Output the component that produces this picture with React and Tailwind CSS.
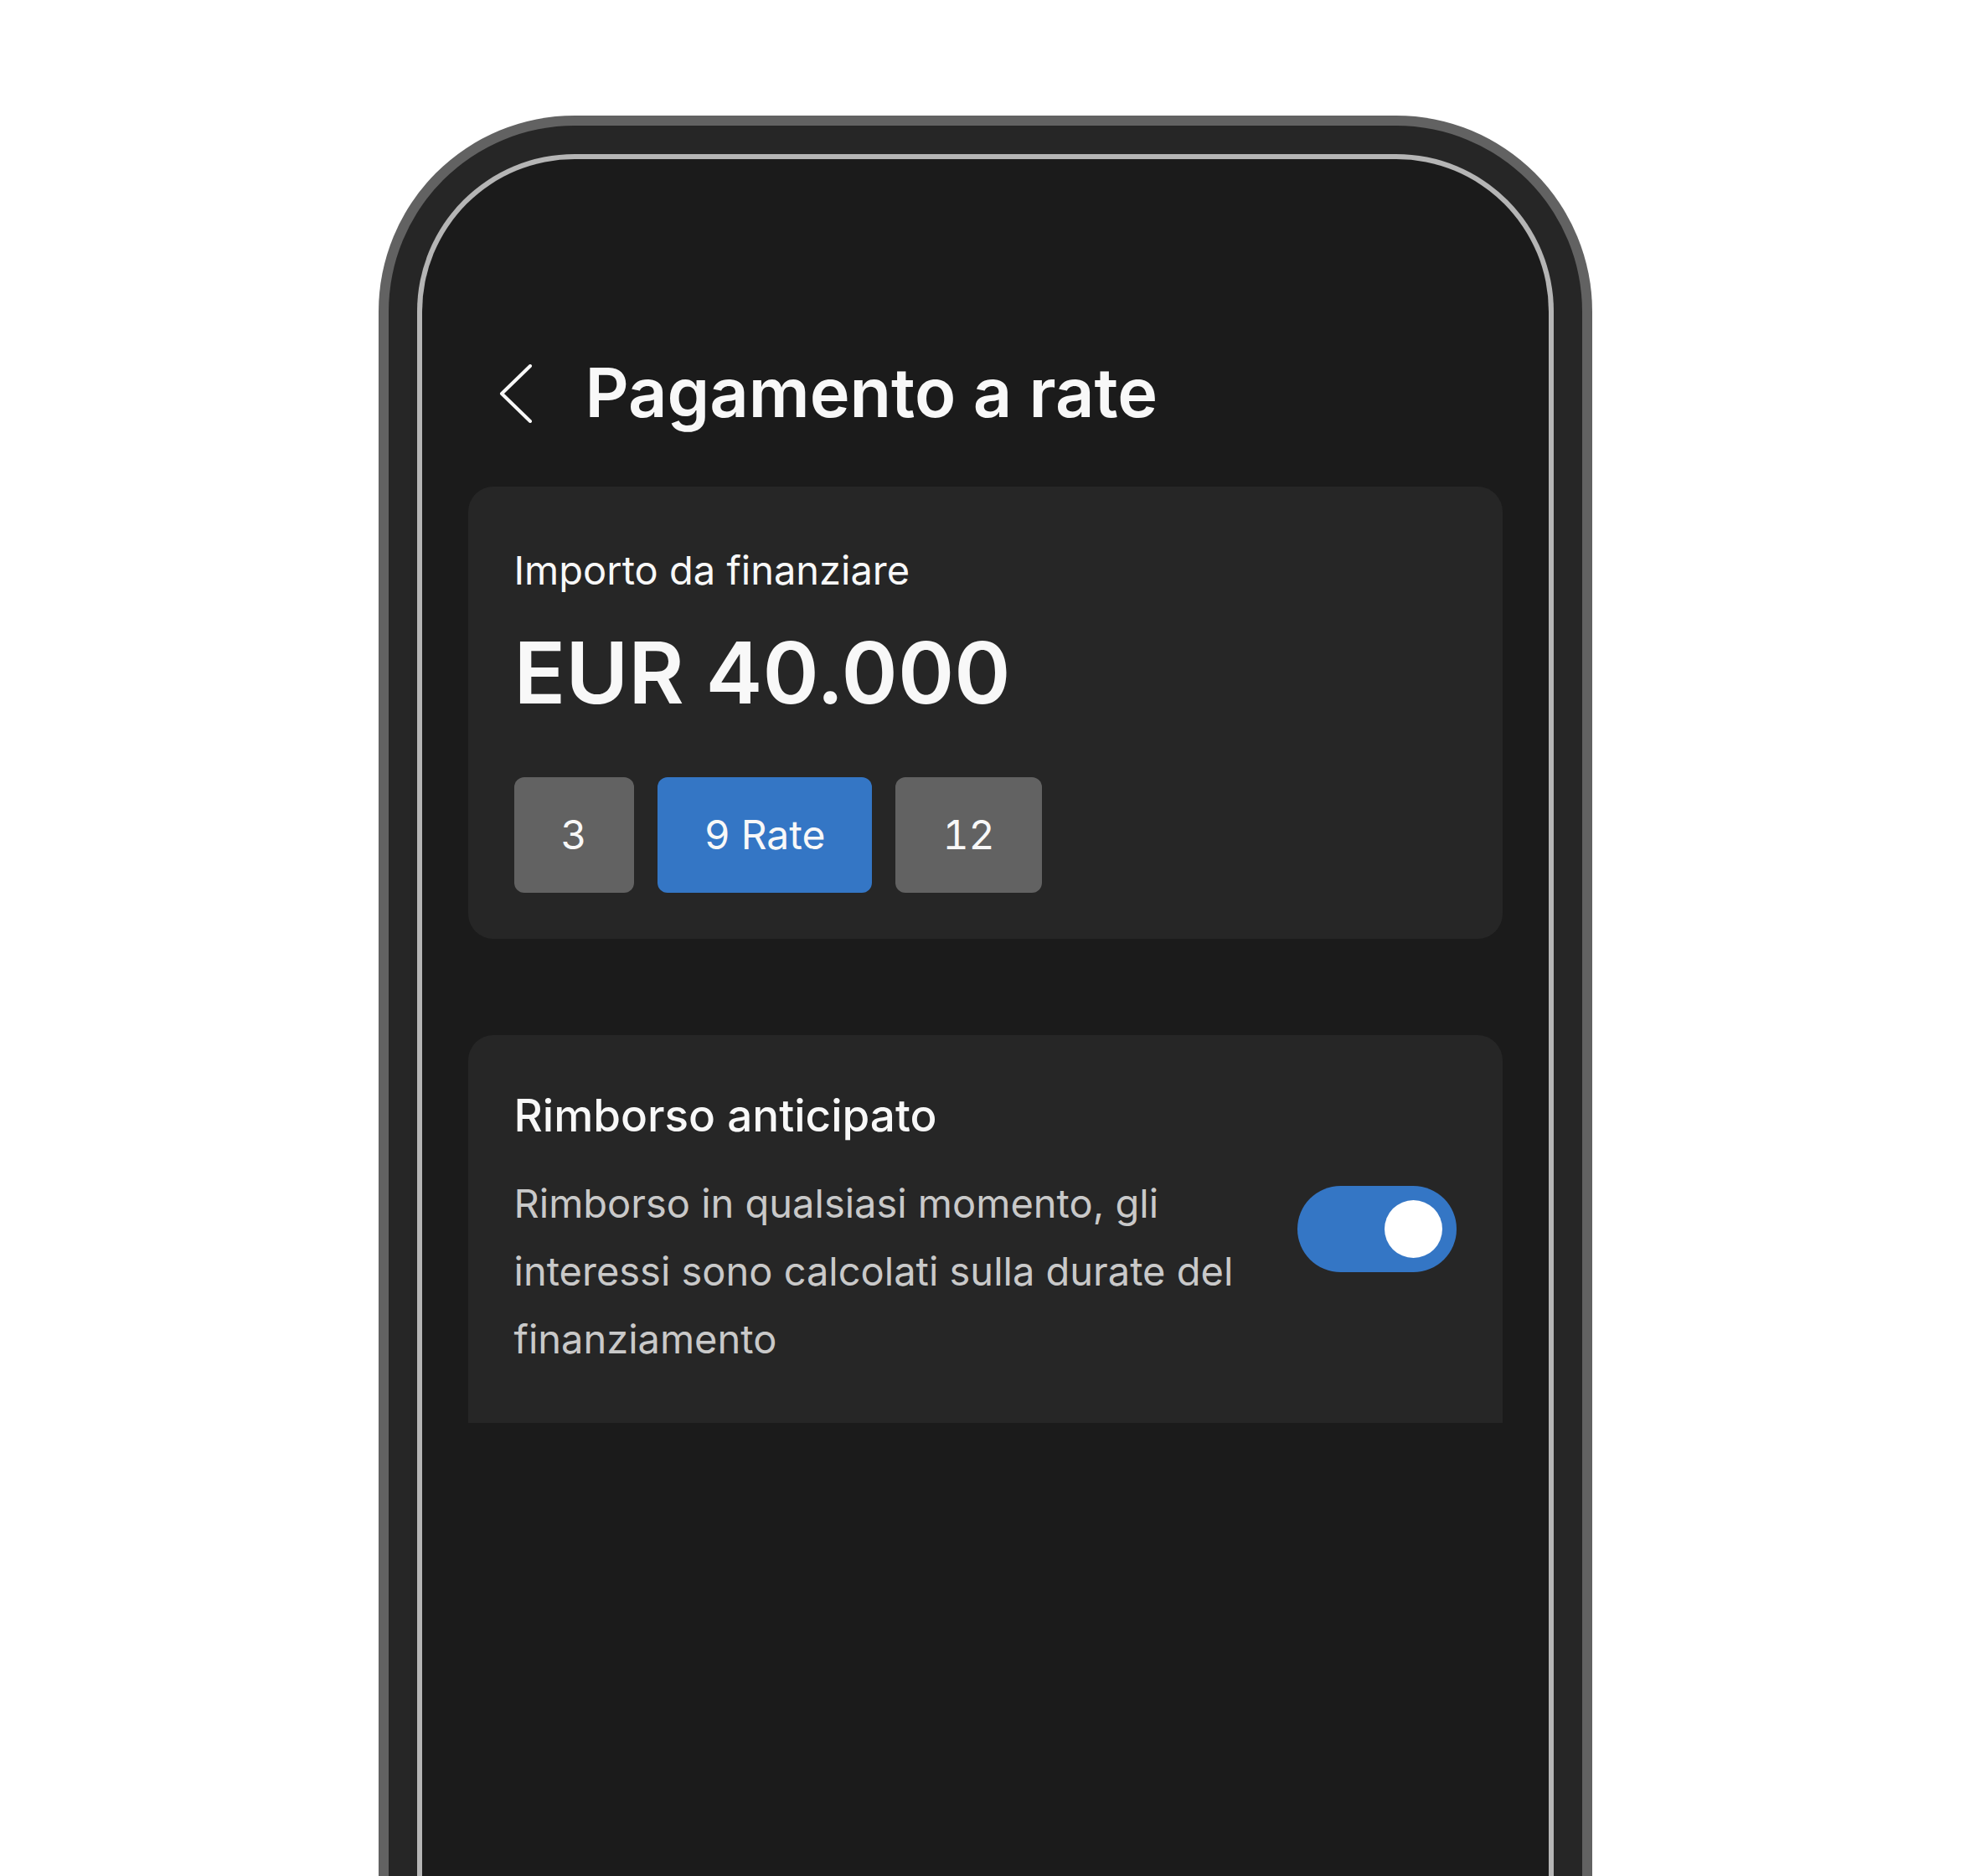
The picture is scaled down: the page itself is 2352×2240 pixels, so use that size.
import React, { useState } from 'react';

const font = { fontFamily: 'Inter, "Noto Sans", sans-serif' };

function BackChevron() {
  return (
    <svg width="40" height="70" viewBox="0 0 40 70" fill="none" className="shrink-0">
      <path
        d="M37 2 L3 35 L37 68"
        stroke="#f8f8f8"
        strokeWidth="4"
        strokeLinecap="round"
        strokeLinejoin="round"
      />
    </svg>
  );
}

function Toggle({ on, onChange }) {
  return (
    <button
      onClick={() => onChange(!on)}
      className={`mt-[20px] flex h-[103px] w-[190px] shrink-0 items-center rounded-full px-[17px] ${
        on ? 'justify-end bg-[#3476c5]' : 'justify-start bg-[#626262]'
      }`}
    >
      <span className="block h-[69px] w-[69px] rounded-full bg-white" />
    </button>
  );
}

export default function App() {
  const [rate, setRate] = useState(9);
  const [early, setEarly] = useState(true);

  const options = [3, 9, 12];

  return (
    <div className="h-[2240px] w-full overflow-hidden bg-white pt-[138px]" style={font}>
      {/* device frame */}
      <div className="mx-auto h-[2400px] w-[1449px] rounded-[234px] bg-[#626262] p-[12px]">
        <div className="h-full rounded-[222px] bg-[#262626] p-[34px]">
          <div className="h-full rounded-[188px] bg-[#b5b5b5] p-[6px]">
            <div className="flex h-full flex-col rounded-[182px] bg-[#1b1b1b] px-[55px] pt-[239px]">
              {/* header */}
              <div className="flex items-center gap-[63px] pl-[37px]">
                <BackChevron />
                <h1 className="text-[81px] font-semibold leading-none text-[#f8f8f8]">
                  Pagamento a rate
                </h1>
              </div>

              {/* amount card */}
              <div className="mt-[71px] rounded-[30px] bg-[#262626] px-[55px] pb-[55px] pt-[76px]">
                <p className="text-[47px] leading-none text-[#f8f8f8]">Importo da finanziare</p>
                <p className="mt-[48px] text-[102px] font-semibold leading-none text-[#f8f8f8]">
                  EUR 40.000
                </p>
                <div className="mt-[74px] flex gap-[28px]">
                  {options.map((n) => (
                    <button
                      key={n}
                      onClick={() => setRate(n)}
                      className={`flex h-[138px] items-center rounded-[12px] px-[56px] text-[48px] leading-none tabular-nums text-[#f8f8f8] ${
                        rate === n ? 'bg-[#3476c5]' : 'bg-[#626262]'
                      }`}
                    >
                      {rate === n ? `${n} Rate` : n}
                    </button>
                  ))}
                </div>
              </div>

              {/* early repayment */}
              <div className="mt-[115px] rounded-t-[30px] bg-[#262626] px-[55px] pb-[60px] pt-[70px]">
                <p className="text-[53px] font-medium leading-none text-[#f8f8f8]">
                  Rimborso anticipato
                </p>
                <div className="mt-[37px] flex items-start justify-between">
                  <p className="text-[47px] leading-[81px] text-[#c9c9c9]">
                    Rimborso in qualsiasi momento, gli
                    <br />
                    interessi sono calcolati sulla durate del
                    <br />
                    finanziamento
                  </p>
                  <Toggle on={early} onChange={setEarly} />
                </div>
              </div>
            </div>
          </div>
        </div>
      </div>
    </div>
  );
}
